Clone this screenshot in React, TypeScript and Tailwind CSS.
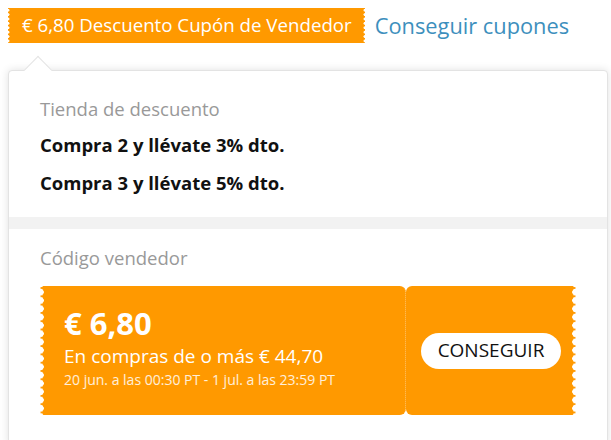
import React from "react";

const font = { fontFamily: '"Open Sans", "Liberation Sans", sans-serif' };

export default function App() {
  return (
    <div className="w-[611px] h-[440px] overflow-hidden bg-white flex flex-col gap-[27px] pl-[8px] pt-[8px]" style={font}>
      {/* top row */}
      <div className="flex items-center gap-[10px]">
        <div className="h-[35px] flex items-center pl-[14px] pr-[13px] text-white text-[18.7px] leading-none whitespace-nowrap bg-[#ff9900] bg-[radial-gradient(circle_at_0_50%,#fff_1.3px,transparent_1.8px),radial-gradient(circle_at_100%_50%,#fff_1.3px,transparent_1.8px)] bg-[length:4px_4.4px] bg-[position:left_top,right_top] bg-repeat-y">
          € 6,80 Descuento Cupón de Vendedor
        </div>
        <a className="text-[21.8px] leading-none text-[#3d8fbd] whitespace-nowrap">
          Conseguir cupones
        </a>
      </div>

      {/* popover */}
      <div className="relative w-[600px] border border-[#e3e3e3] rounded-[4px] bg-white shadow-[0_0_8px_rgba(0,0,0,0.12)]">
        <span className="absolute left-[19px] -top-[11px] w-[20px] h-[20px] rotate-45 bg-white border-l border-t border-[#e3e3e3]" />

        <div className="relative flex flex-col px-[31px] pt-[26px] pb-[22px]">
          <p className="text-[18.5px] leading-[24px] text-[#999]">Tienda de descuento</p>
          <p className="mt-[12px] text-[18.5px] leading-[24px] font-bold text-[#111]">
            Compra 2 y llévate 3% dto.
          </p>
          <p className="mt-[14px] text-[18.5px] leading-[24px] font-bold text-[#111]">
            Compra 3 y llévate 5% dto.
          </p>
        </div>

        <div className="h-[12px] bg-[#f2f2f2]" />

        <div className="flex flex-col gap-[16px] px-[31px] pt-[17px] pb-[30px]">
          <p className="text-[18.5px] leading-[24px] text-[#999]">Código vendedor</p>

          <div className="flex h-[129px]">
            <div className="w-[366px] rounded-r-[6px] border-r border-dotted border-[#ffc36b] pl-[24px] pt-[19px] text-white bg-[#ff9900] bg-[radial-gradient(circle_at_0_50%,#fff_3.5px,transparent_4px)] bg-[length:8px_8.3px] bg-[position:left_2px] bg-repeat-y">
              <p className="text-[31px] leading-[36px] font-bold">€ 6,80</p>
              <p className="mt-[2px] text-[19px] leading-[26px]">En compras de o más € 44,70</p>
              <p className="mt-[2px] text-[14px] leading-[18px] text-white/85">
                20 jun. a las 00:30 PT - 1 jul. a las 23:59 PT
              </p>
            </div>
            <div className="flex-1 rounded-l-[6px] flex items-center justify-center bg-[#ff9900] bg-[radial-gradient(circle_at_100%_50%,#fff_3.5px,transparent_4px)] bg-[length:8px_8.3px] bg-[position:right_2px] bg-repeat-y">
              <button className="w-[140px] h-[36px] rounded-full bg-white text-[19px] font-medium text-[#111] leading-none">
                CONSEGUIR
              </button>
            </div>
          </div>
        </div>
      </div>
    </div>
  );
}
